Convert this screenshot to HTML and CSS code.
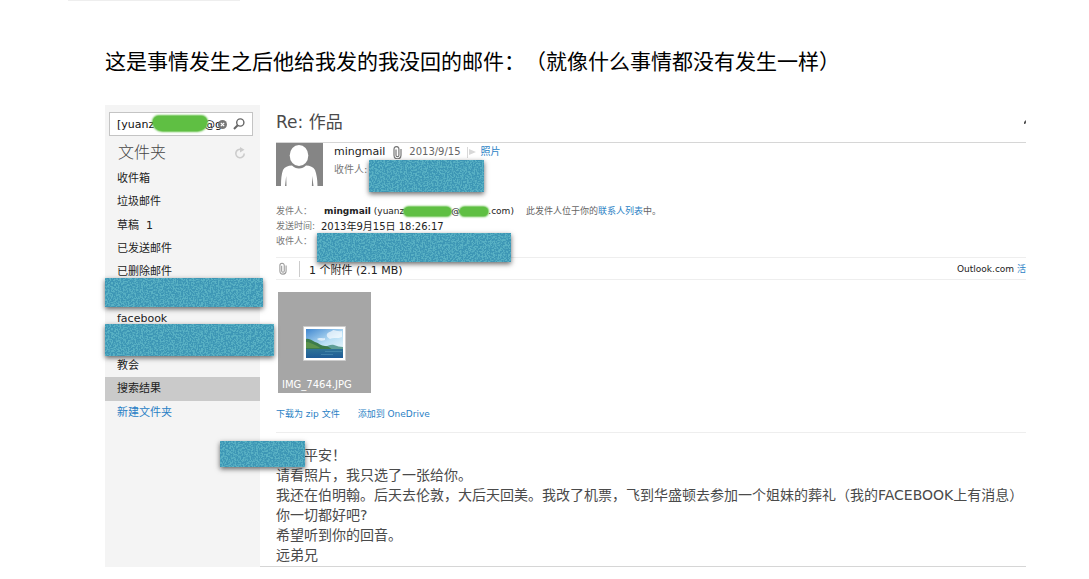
FILE: index.html
```html
<!DOCTYPE html>
<html lang="zh-CN">
<head>
  <meta charset="utf-8">
  <title>Re: 作品</title>
  <link rel="stylesheet" href="styles.css">
</head>
<body>
  <hr class="top-rule">
  <h1 class="note">这是事情发生之后他给我发的我没回的邮件：（就像什么事情都没有发生一样）</h1>

  <div class="mail">
    <nav class="sidebar">
      <form class="search">
        <input class="search-input" type="text" aria-label="搜索" value="[yuanz">
        <span class="scribble scribble-search"></span>
        <span class="search-tail">@g</span>
        <button class="icon-btn clear" type="button" aria-label="清除">
          <svg width="9" height="9" viewBox="0 0 9 9"><circle cx="4.5" cy="4.5" r="4.5" fill="#777"/><path d="M2.8 2.8l3.4 3.4M6.2 2.8L2.8 6.2" stroke="#fff" stroke-width="1.2"/></svg>
        </button>
        <button class="icon-btn" type="submit" aria-label="搜索">
          <svg width="12" height="12" viewBox="0 0 12 12" fill="none" stroke="#666"><circle cx="7.3" cy="4.5" r="3.6" stroke-width="1.4"/><path d="M4.7 7.2L1 11" stroke-width="2"/></svg>
        </button>
      </form>
      <div class="folders-head">
        <h2 class="folders-title">文件夹</h2>
        <button class="icon-btn" type="button" aria-label="刷新">
          <svg width="12" height="12" viewBox="0 0 12 12" fill="none" stroke="#ccc" stroke-width="1.6"><path d="M7.500 2.600A4.200 4.200 0 1 0 10.200 6.500"/><path fill="#ccc" stroke="none" d="M6 0l4.500 2.800L6 5.600z"/></svg>
        </button>
      </div>
      <ul class="folders">
        <li><a href="#">收件箱</a></li>
        <li><a href="#">垃圾邮件</a></li>
        <li><a href="#">草稿&nbsp; 1</a></li>
        <li><a href="#">已发送邮件</a></li>
        <li><a href="#">已删除邮件</a></li>
        <li><span class="redact redact-folder1"></span></li>
        <li><a href="#">facebook</a></li>
        <li><span class="redact redact-folder2"></span></li>
        <li><a href="#">教会</a></li>
        <li class="selected"><a href="#">搜索结果</a></li>
        <li><a class="link" href="#">新建文件夹</a></li>
      </ul>
    </nav>

    <main class="reading">
      <header class="subject">
        <h2>Re: 作品</h2>
        <svg width="2" height="5" viewBox="0 0 2 5"><path d="M2 0L0 2v2h1l1-1z" fill="#555"/></svg>
      </header>

      <section class="sender">
        <svg class="avatar" width="47" height="43" viewBox="0 0 47 43">
          <path fill="#858585" d="M0 0h47v43H0z"/>
          <ellipse cx="23" cy="12.500" rx="9.300" ry="10.500" fill="#fff"/>
          <path fill="#fff" d="M5 43c0-7 .5-12 2-16 1.500-3 5-4.500 9-4.500 2 2 4 3 7 3s5-1 7-3c4 0 7.500 1.500 9 4.500 1.500 4 2.500 9 2.500 16h-4l-1.300-10-.3 10H10.500l-.3-10L9 43z"/>
        </svg>
        <div class="sender-info">
          <div class="sender-line">
            <span class="sender-name">mingmail</span>
            <svg width="9" height="13" viewBox="0 0 9 13" fill="none" stroke="#777" stroke-width="1.2"><path d="M3 3.500v5.700a1.400 1.400 0 0 0 2.900 0V3A2.300 2.300 0 0 0 1 3v6.300a3.500 3.500 0 0 0 7 0V3"/></svg>
            <span class="sender-date">2013/9/15</span>
            <svg class="flag" width="9" height="11" viewBox="0 0 9 11" fill="#d8d8d8"><path d="M0 0h1v11H0zM2 2l7 3-7 3z"/></svg>
            <a class="link" href="#">照片</a>
          </div>
          <div class="recipient">收件人:<span class="redact redact-to"></span></div>
        </div>
      </section>

      <section class="details">
        <div class="detail">
          <span class="label">发件人：</span>
          <span class="from"><b>mingmail</b> (yuanz<span class="scribble scribble-user"></span>@<span class="scribble scribble-host"></span>.com)</span>
          <span class="contact">此发件人位于你的<a class="link" href="#">联系人列表</a>中。</span>
        </div>
        <div class="detail">
          <span class="label">发送时间:</span>
          <span class="sent">2013年9月15日 18:26:17</span>
        </div>
        <div class="detail">
          <span class="label">收件人：</span>
          <span class="redact redact-detail"></span>
        </div>
      </section>

      <section class="attach-bar">
        <svg width="8" height="13" viewBox="0 0 9 13" fill="none" stroke="#999" stroke-width="1.2"><path d="M3 3.500v5.700a1.400 1.400 0 0 0 2.900 0V3A2.300 2.300 0 0 0 1 3v6.300a3.500 3.500 0 0 0 7 0V3"/></svg>
        <span class="attach-count">1 个附件 (2.1 MB)</span>
        <span class="active-view">Outlook.com <a class="link" href="#">活</a></span>
      </section>

      <a class="thumb" href="#">
        <svg width="43" height="35" viewBox="0 0 43 35">
          <defs>
            <linearGradient id="sky" x1="0" y1="0" x2="1" y2="1"><stop offset="0" stop-color="#3f86cf"/><stop offset=".6" stop-color="#b9dff5"/><stop offset="1" stop-color="#e4f4fb"/></linearGradient>
            <linearGradient id="sea" x1="0" y1="0" x2="0" y2="1"><stop offset="0" stop-color="#2f7396"/><stop offset="1" stop-color="#1f5c97"/></linearGradient>
          </defs>
          <path fill="#fff" stroke="#ccc" d="M.5.500h42v34H.5z"/>
          <path fill="url(#sky)" d="M3 3h37v20H3z"/>
          <path fill="#fff" opacity=".65" d="M24 8c2-3 5-2 6-4 3 0 5 2 9 1v6c-4 2-9 0-12 2-2-1-4-3-3-5zM14 13c3-2 5 0 8-1v2c-3 1-6 1-8-1z"/>
          <path fill="#5f9f98" d="M20 22c4-2 8-4 11-3s6 2 9 2v3H20z"/>
          <path fill="#3c7b4b" d="M3 13c4-1 6 2 9 3 4 1 6 4 10 4 3 0 5 2 8 4H3z"/>
          <path fill="#6fa44d" opacity=".6" d="M3 16c4 0 6 2 9 3 2 1 4 2 5 3H3z"/>
          <path fill="url(#sea)" d="M3 23h37v9H3z"/>
          <path stroke="#70b2cd" opacity=".35" d="M22 25.500h17M18 28.500h12"/>
        </svg>
        <span class="thumb-name">IMG_7464.JPG</span>
      </a>
      <div class="attach-links">
        <a class="link" href="#">下载为 zip 文件</a>
        <a class="link" href="#">添加到 OneDrive</a>
      </div>

      <article class="message">
        <p class="greeting"><span class="redact redact-name"></span>平安！</p>
        <p>请看照片，我只选了一张给你。</p>
        <p>我还在伯明翰。后天去伦敦，大后天回美。我改了机票，飞到华盛顿去参加一个姐妹的葬礼（我的FACEBOOK上有消息）</p>
        <p>你一切都好吧?</p>
        <p>希望听到你的回音。</p>
        <p>远弟兄</p>
      </article>
    </main>
  </div>
</body>
</html>
```
FILE: styles.css
```css
* {
  box-sizing: border-box;
}
body {
  margin: 0;
  background: #fff;
  color: #222;
  font-family: "DejaVu Sans", "Noto Sans CJK SC", sans-serif;
  font-size: 11px;
  text-spacing-trim: space-all;
}
h1, h2, p, ul {
  margin: 0;
  padding: 0;
  font-weight: normal;
}
a {
  color: inherit;
  text-decoration: none;
}
svg {
  display: block;
  flex: none;
}
.link {
  color: #2a7fc5;
}

.top-rule {
  width: 172px;
  height: 1px;
  margin: 0 0 0 68px;
  border: 0;
  background: #eee;
}
.note {
  margin: 44px 63px 30px 105px;
  font-family: "Noto Sans CJK SC", sans-serif;
  font-size: 21px;
  line-height: 30px;
  color: #000;
  white-space: nowrap;
}
.mail {
  display: flex;
  margin: 0 63px 0 105px;
}

/* left column */
.sidebar {
  flex: none;
  width: 155px;
  padding: 7px 0 0;
  background: #f4f4f4;
}
.search {
  position: relative;
  display: flex;
  align-items: center;
  height: 24px;
  margin: 0 7px 0 4px;
  padding: 0 7px;
  border: 1px solid #c4c4c4;
  background: #fff;
}
.search-input {
  flex: 1;
  min-width: 0;
  padding: 0;
  border: 0;
  outline: 0;
  background: none;
  font: inherit;
  color: #111;
}
.search-tail {
  white-space: nowrap;
  color: #111;
}
.icon-btn {
  flex: none;
  padding: 0;
  border: 0;
  background: none;
}
.icon-btn + .icon-btn {
  margin-left: 6px;
}
.clear {
  margin-left: -4px;
}
.folders-head {
  display: flex;
  align-items: center;
  justify-content: space-between;
  margin: 4px 14px 2px 13px;
}
.folders-title {
  font-size: 16px;
  font-weight: 300;
  line-height: 25px;
  color: #444;
}
.folders {
  display: grid;
  grid-auto-rows: 1fr;
  min-height: 257px;
  list-style: none;
}
.folders li {
  position: relative;
  padding-left: 12px;
  line-height: 23px;
}
.folders .selected {
  background: #cacaca;
}

/* covered areas */
.redact {
  position: absolute;
  z-index: 1;
  background: #3d96b5 url("data:image/svg+xml,%3Csvg xmlns='http://www.w3.org/2000/svg' width='200' height='64'%3E%3Cfilter id='n' x='0' y='0' width='100%25' height='100%25'%3E%3CfeTurbulence type='fractalNoise' baseFrequency='.6' numOctaves='2' seed='4'/%3E%3CfeColorMatrix values='0 0 0 0 .1 0 0 0 0 .44 0 0 0 0 .55 6 0 0 0 -2.6'/%3E%3C/filter%3E%3Crect width='200' height='64' filter='url(%23n)'/%3E%3C/svg%3E");
  box-shadow: 0 2px 5px rgba(0, 0, 0, 0.6);
}
.redact-folder1 {
  top: -6px;
  left: 0;
  width: 158px;
  height: 29px;
}
.redact-folder2 {
  top: -7px;
  left: 0;
  width: 169px;
  height: 32px;
}
.redact-to {
  top: -1px;
  left: 35px;
  width: 115px;
  height: 32px;
}
.redact-detail {
  top: -1px;
  left: 41px;
  width: 194px;
  height: 29px;
}
.redact-name {
  top: -4px;
  left: -56px;
  width: 85px;
  height: 26px;
}
.scribble {
  display: inline-block;
  height: 9px;
  border-radius: 5px;
  background: #5fbf43;
  box-shadow: 0 0 2px 1px #5fbf43;
  vertical-align: middle;
}
.scribble-search {
  position: absolute;
  top: 3px;
  left: 43px;
  width: 54px;
  height: 15px;
  border-radius: 7px 7px 12px 12px;
}
.scribble-user {
  width: 47px;
}
.scribble-host {
  width: 28px;
}

/* reading pane */
.reading {
  flex: 1;
  min-width: 0;
  padding-left: 16px;
}
.subject {
  display: flex;
  align-items: center;
  justify-content: space-between;
  padding: 6px 0 9px;
  border-bottom: 1px solid #d6d6d6;
}
.subject h2 {
  font-size: 17px;
  line-height: 22px;
  color: #4a4a4a;
}
.sender {
  display: flex;
  gap: 11px;
}
.sender-line {
  display: flex;
  align-items: center;
  line-height: 18px;
  font-size: 10px;
}
.sender-name {
  margin-right: 8px;
  font-size: 11px;
}
.sender-date {
  margin: 0 6px 0 7px;
  color: #666;
}
.flag {
  margin-right: 5px;
}
.recipient {
  position: relative;
  font-size: 10px;
  line-height: 18px;
  color: #777;
}
.details {
  margin: 18px 0 8px;
  line-height: 15px;
}
.detail {
  position: relative;
  display: flex;
  height: 15px;
  white-space: nowrap;
}
.label {
  width: 45px;
  font-size: 9px;
  color: #777;
}
.from {
  margin: 0 12px 0 3px;
  font-size: 9px;
}
.sent {
  font-size: 10px;
}
.contact {
  font-size: 9px;
  color: #666;
}
.attach-bar {
  display: flex;
  align-items: center;
  height: 23px;
  padding-left: 3px;
  border-top: 1px solid #eee;
  border-bottom: 1px solid #eee;
}
.attach-count {
  margin-left: 12px;
  padding-left: 9px;
  border-left: 1px solid #ccc;
}
.active-view {
  margin-left: auto;
  font-size: 9px;
}
.thumb {
  display: flex;
  flex-direction: column;
  align-items: center;
  justify-content: flex-end;
  width: 93px;
  height: 101px;
  margin: 12px 0 13px 2px;
  background: #a6a6a6;
}
.thumb-name {
  align-self: flex-start;
  margin-top: 16px;
  padding-left: 4px;
  font-size: 10px;
  line-height: 16px;
  color: #fff;
}
.attach-links {
  display: flex;
  gap: 18px;
  padding-bottom: 10px;
  border-bottom: 1px solid #eee;
  font-size: 9px;
  line-height: 16px;
}
.message {
  margin-left: -16px;
  padding: 12px 0 1px 16px;
  border-bottom: 1px solid #d6d6d6;
  font-size: 14px;
  line-height: 20px;
  color: #4a4a4a;
  white-space: nowrap;
}
.greeting {
  position: relative;
  text-indent: 28px;
}
```
